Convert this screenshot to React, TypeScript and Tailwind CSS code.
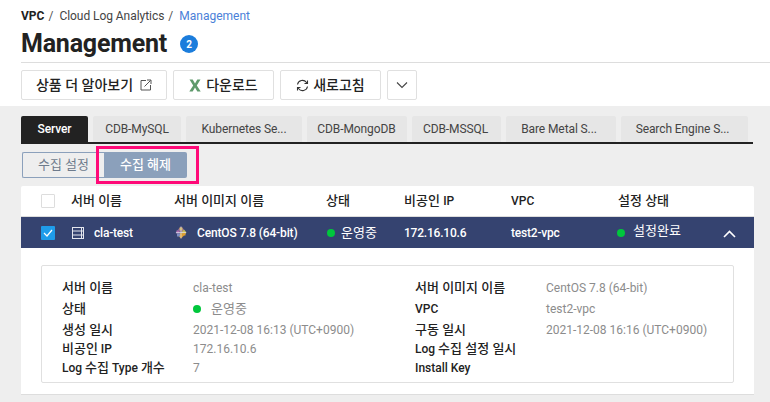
import React from "react";

const font = { fontFamily: '"Roboto", "Noto Sans CJK KR", sans-serif' };

function K({ children }: { children: React.ReactNode }) {
  return <span className="text-[13px] leading-[14px]">{children}</span>;
}

function Dot() {
  return <span className="inline-block w-[8px] h-[8px] rounded-full bg-[#00c73c] shrink-0" />;
}

function Tab({ w, label, active, extra }: { w: string; label: string; active?: boolean; extra?: string }) {
  return (
    <div
      className={`${w} ${extra ?? ""} h-[26px] flex items-center justify-center rounded-t-[2px] text-[12px] tracking-[-0.1px] ${
        active ? "bg-[#222222] text-white font-medium" : "bg-[#e6e6e6] text-[#444444]"
      }`}
    >
      {label}
    </div>
  );
}

function Detail({ label, value, dot, h }: { label: React.ReactNode; value?: React.ReactNode; dot?: boolean; h: string }) {
  return (
    <div className={`flex items-center ${h}`}>
      <div className="w-[131px] text-[12px] font-medium text-[#222222] whitespace-nowrap">{label}</div>
      <div className="text-[12px] text-[#8c8c8c] whitespace-nowrap flex items-center">
        {dot && <span className="mr-[10px] flex"><Dot /></span>}
        {value}
      </div>
    </div>
  );
}

function CentOS() {
  return (
    <svg width="12" height="13" viewBox="0 0 12 13">
      <path d="M6 0.5L9 3.5 6 6.5 3 3.5z" fill="#9a6aa8" />
      <path d="M0.5 6.5L3 3.5 6 6.5 3 9.5z" fill="#5f6a8c" />
      <path d="M6 6.5L9 3.5 11.5 6.5 9 9.5z" fill="#c8bd5c" />
      <path d="M3 9.5L6 6.5 9 9.5 6 12.5z" fill="#e0a030" />
      <rect x="4.5" y="1.5" width="3" height="3" fill="#c9b04a" />
      <rect x="1.5" y="4.5" width="3" height="3" fill="#b06ab0" />
      <rect x="7.5" y="6.5" width="3" height="3" fill="#e0a030" />
      <rect x="2" y="7.5" width="3" height="3" fill="#7f8fc0" />
      <path d="M6 0.5v12M1 6.5h10" stroke="#dfe2ee" strokeWidth="0.7" />
    </svg>
  );
}

export default function App() {
  return (
    <div style={font} className="w-[770px] h-[402px] overflow-hidden bg-[#eeeeee] flex flex-col relative">
      <div className="bg-white h-[106px] shrink-0 pl-[21px]">
        <div className="h-[29px] pt-[9px] flex items-start text-[12px] leading-[14px] whitespace-nowrap">
          <span className="font-bold text-[#222222]">VPC</span>
          <span className="text-[#555555] ml-[4px]">/</span>
          <span className="text-[#444444] ml-[6px] tracking-[-0.05px]">Cloud Log Analytics</span>
          <span className="text-[#555555] ml-[4px]">/</span>
          <span className="text-[#4a80d8] ml-[6px]">Management</span>
        </div>
        <div className="h-[30px] mb-[3px] flex items-center">
          <span className="text-[25px] leading-[30px] font-bold text-[#222222] tracking-[-0.2px]">Management</span>
          <span className="ml-[13px] w-[18px] h-[18px] rounded-full bg-[#1b7ddc] text-white text-[10px] font-bold flex items-center justify-center">2</span>
        </div>
        <div className="h-[1px] bg-[#dddddd]" />
        <div className="flex gap-[6px] mt-[7px] text-[14px] font-medium text-[#222222]">
          <button className="w-[146px] h-[30px] border border-[#e0e0e0] rounded-[2px] flex items-center justify-center">
            상품 더 알아보기
            <svg className="ml-[7px]" width="12" height="12" viewBox="0 0 12 12" fill="none" stroke="#555555" strokeWidth="1">
              <path d="M6 1.5H1v9.5h9.5V6" />
              <path d="M4.5 7.5L10.5 1.5M7 1h4v4" />
            </svg>
          </button>
          <button className="w-[101px] h-[30px] border border-[#e0e0e0] rounded-[2px] flex items-center justify-center">
            <svg className="mr-[5px]" width="12" height="13" viewBox="0 0 12 13">
              <path d="M0.5 0.5h3.2L6 4.5 8.3 0.5h3.2L7.8 6.5l3.9 6H8.3L6 8.6 3.7 12.5H0.3l3.9-6z" fill="#5f9a6c" />
            </svg>
            다운로드
          </button>
          <button className="w-[101px] h-[30px] border border-[#e0e0e0] rounded-[2px] flex items-center justify-center">
            <svg className="mr-[4px]" width="13" height="13" viewBox="0 0 13 13" fill="none" stroke="#333333" strokeWidth="1.1">
              <path d="M1.5 5.5A5 5 0 0 1 10.5 3.5L11.5 4.5" />
              <path d="M11.5 1.5v3h-3" />
              <path d="M11.5 7.5A5 5 0 0 1 2.5 9.5L1.5 8.5" />
              <path d="M1.5 11.5v-3h3" />
            </svg>
            새로고침
          </button>
          <button className="w-[30px] h-[30px] border border-[#e0e0e0] rounded-[2px] flex items-center justify-center">
            <svg width="12" height="8" viewBox="0 0 12 8" fill="none" stroke="#444444" strokeWidth="1.1">
              <path d="M1 1.5l5 5 5-5" />
            </svg>
          </button>
        </div>
      </div>

      <div className="pl-[21px] pt-[10px] flex-1 flex flex-col">
        <div className="w-[732px] flex gap-[5px] border-b-2 border-[#222222]">
          <Tab w="w-[67px]" label="Server" active />
          <Tab w="w-[88px]" label="CDB-MySQL" />
          <Tab w="w-[116px]" label="Kubernetes Se..." />
          <Tab w="w-[100px]" label="CDB-MongoDB" extra="pr-[1px]" />
          <Tab w="w-[89px]" label="CDB-MSSQL" extra="pr-[2px]" />
          <Tab w="w-[110px]" label="Bare Metal S..." extra="pr-[4px]" />
          <Tab w="w-[127px]" label="Search Engine S..." extra="pr-[4px]" />
        </div>

        <div className="flex mt-[8px] pl-[1px] text-[13px]">
          <button className="w-[82px] h-[26px] border border-r-0 border-[#8ba0bb] rounded-l-[2px] text-[#6e7b8c] bg-[#eeeeee]">수집 설정</button>
          <button className="w-[83px] h-[26px] bg-[#8ba0bb] rounded-r-[2px] text-white font-medium">수집 해제</button>
        </div>

        <div className="w-[733px] h-[209px] mt-[8px] bg-white rounded-t-[2px] border-b border-[#dddddd] flex flex-col">
          <div className="h-[31px] flex items-center text-[13px] font-medium text-[#222222] border-b border-[#dddddd] shrink-0">
            <span className="ml-[20px] w-[14px] h-[14px] bg-white border border-[#dddddd] rounded-[1px]" />
            <span className="ml-[16px] w-[103px]">서버 이름</span>
            <span className="w-[152px]">서버 이미지 이름</span>
            <span className="w-[78px]">상태</span>
            <span className="w-[107px]"><K>비공인</K> <span className="text-[12px]">IP</span></span>
            <span className="w-[107px] text-[12px]">VPC</span>
            <span>설정 상태</span>
          </div>
          <div className="h-[31px] bg-[#354370] flex items-center text-[12px] text-white shrink-0 whitespace-nowrap">
            <span className="ml-[20px] w-[14px] h-[14px] bg-[#1f9cea] rounded-[1px] flex items-center justify-center">
              <svg width="10" height="8" viewBox="0 0 10 8" fill="none" stroke="white" strokeWidth="1.2">
                <path d="M1 4l3 3 5-6" />
              </svg>
            </span>
            <svg className="ml-[17px]" width="12" height="12" viewBox="0 0 12 12" fill="none" stroke="#e4e6ee" strokeWidth="1">
              <rect x="0.5" y="0.5" width="11" height="11" />
              <path d="M0.5 4h11M0.5 8h11M9.5 0.5v11" />
            </svg>
            <span className="ml-[10px] w-[81px] font-medium tracking-[-0.2px]">cla-test</span>
            <CentOS />
            <span className="ml-[10px] w-[130px] font-medium tracking-[-0.15px]">CentOS 7.8 (64-bit)</span>
            <span className="flex items-center w-[77px]"><Dot /><span className="ml-[6px] text-[13px]">운영중</span></span>
            <span className="w-[107px] font-medium tracking-[-0.2px]">172.16.10.6</span>
            <span className="w-[106px] font-medium tracking-[-0.2px]">test2-vpc</span>
            <span className="flex items-center"><Dot /><span className="ml-[8px] text-[13px] -mt-[3px]">설정완료</span></span>
            <svg className="ml-[42px] mt-[2px]" width="13" height="8" viewBox="0 0 13 8" fill="none" stroke="white" strokeWidth="1.6">
              <path d="M1 7l5.5-5.5L12 7" />
            </svg>
          </div>
          <div className="ml-[20px] mt-[17px] w-[693px] h-[118px] border border-[#e0e0e0] rounded-[2px] pt-[11px] pl-[20px] flex">
            <div className="w-[353px]">
              <Detail h="h-[21px]" label={<K>서버 이름</K>} value="cla-test" />
              <Detail h="h-[21px]" label={<K>상태</K>} value={<K>운영중</K>} dot />
              <Detail h="h-[21px]" label={<K>생성 일시</K>} value="2021-12-08 16:13 (UTC+0900)" />
              <Detail h="h-[17px]" label={<><K>비공인</K> IP</>} value="172.16.10.6" />
              <Detail h="h-[21px]" label={<>Log <K>수집</K> Type <K>개수</K></>} value="7" />
            </div>
            <div>
              <Detail h="h-[21px]" label={<K>서버 이미지 이름</K>} value="CentOS 7.8 (64-bit)" />
              <Detail h="h-[21px]" label="VPC" value="test2-vpc" />
              <Detail h="h-[21px]" label={<K>구동 일시</K>} value="2021-12-08 16:16 (UTC+0900)" />
              <Detail h="h-[17px]" label={<>Log <K>수집 설정 일시</K></>} />
              <Detail h="h-[21px]" label="Install Key" />
            </div>
          </div>
        </div>
      </div>

      <div className="absolute left-[96px] top-[146px] w-[103px] h-[38px] border-[3px] border-[#ff0a78] pointer-events-none" />
    </div>
  );
}
